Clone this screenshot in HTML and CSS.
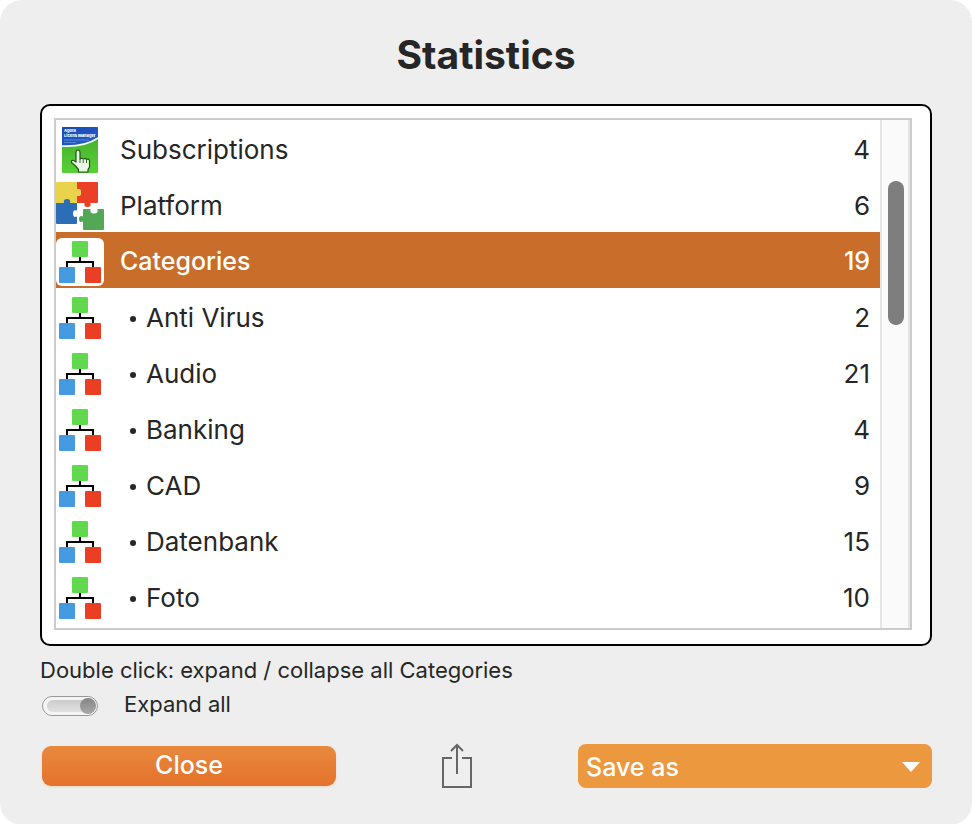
FILE: index.html
```html
<!DOCTYPE html>
<html lang="en">
<head>
<meta charset="utf-8">
<meta name="viewport" content="width=device-width, initial-scale=1">
<title>Statistics</title>
<link rel="stylesheet" href="styles.css">
</head>
<body>
<svg class="defs" aria-hidden="true">
  <symbol id="tree" viewBox="0 0 48 48">
    <path d="M24 18v6M11 30v-6h26v6" fill="none" stroke="#000" stroke-width="2"/>
    <rect x="16" y="3" width="16" height="16" rx="1" fill="#62d84e"/>
    <rect x="3" y="29" width="16" height="16" rx="1" fill="#469ae0"/>
    <rect x="29" y="29" width="16" height="16" rx="1" fill="#ea3f25"/>
  </symbol>
</svg>
<main class="dialog">
  <h1 class="title">Statistics</h1>
  <section class="frame">
    <div class="list">
      <table class="rows">
        <tbody>
          <tr>
            <td class="icon">
              <svg viewBox="0 0 48 48" aria-hidden="true">
                <defs>
                  <linearGradient id="sky" x1="0" y1="0" x2="1" y2="1"><stop offset="0" stop-color="#1747b8"/><stop offset="1" stop-color="#2862c8"/></linearGradient>
                  <linearGradient id="grass" x1="0" y1="0" x2="0" y2="1"><stop offset="0" stop-color="#46a52c"/><stop offset="1" stop-color="#55d334"/></linearGradient>
                </defs>
                <rect x="6" y="1" width="36" height="46" rx="1" fill="url(#grass)"/>
                <path d="M7 1h34q1 0 1 1v10q-13 9-36 8V2q0-1 1-1z" fill="url(#sky)"/>
                <path d="M6 20q23 1 36-8" fill="none" stroke="#f4fbff" stroke-width="1.6"/>
                <text class="cover" x="8" y="6">Agora</text>
                <text class="cover" x="8" y="11">Licens Manager</text>
                <path d="M8 14h25M8 16.500h12" stroke="#6f9be0" stroke-width=".7"/>
                <path d="M20 36V26.500q0-2.500 2-2.500t2 2.500V33l1.800-.8 1.700.8 1.800-.6 1.500 1 1.700-.4 1 1.500V41L32 43.500V46h-9.500v-2.500l-3-3.500-4-3.500q-.5-2.500 2-2z" fill="#e9f9e4" stroke="#26501f" stroke-width="1.200" stroke-linejoin="round"/>
                <path d="M24 33v4M27.200 33.500V37M30.500 34v3" stroke="#26501f" stroke-width=".9"/>
              </svg>
            </td>
            <td class="name">Subscriptions</td>
            <td class="count">4</td>
          </tr>
          <tr>
            <td class="icon">
              <svg viewBox="0 0 48 48" aria-hidden="true">
                <path d="M1 0h20v21H0V1q0-1 1-1z" fill="#e9d34b"/>
                <path d="M21 0h20q1 0 1 1v19q0 1-1 1h-6.500v1q1 3-3 3t-3-3v-1H21v-7.500q4 1.500 4-3t-4-3z" fill="#eb4026"/>
                <path d="M21 7.500q4-1.500 4 3t-4 3z" fill="#e9d34b"/>
                <path d="M0 21h8q-1-4 3-4t3 4h7v7.500q-4-1.500-4 3t4 3V41q0 1-1 1H1q-1 0-1-1z" fill="#2d6db8"/>
                <path d="M28 27h6.500q-1 4.500 3.500 4.500t3.500-4.500H47q1 0 1 1v19q0 1-1 1H28q-1 0-1-1v-7.500q-4 1.500-4-2.500t4-2.500V28q0-1 1-1z" fill="#52a855"/>
              </svg>
            </td>
            <td class="name">Platform</td>
            <td class="count">6</td>
          </tr>
          <tr class="selected">
            <td class="icon"><svg aria-hidden="true"><use href="#tree"/></svg></td>
            <td class="name">Categories</td>
            <td class="count">19</td>
          </tr>
          <tr class="child">
            <td class="icon"><svg aria-hidden="true"><use href="#tree"/></svg></td>
            <td class="name">Anti Virus</td>
            <td class="count">2</td>
          </tr>
          <tr class="child">
            <td class="icon"><svg aria-hidden="true"><use href="#tree"/></svg></td>
            <td class="name">Audio</td>
            <td class="count">21</td>
          </tr>
          <tr class="child">
            <td class="icon"><svg aria-hidden="true"><use href="#tree"/></svg></td>
            <td class="name">Banking</td>
            <td class="count">4</td>
          </tr>
          <tr class="child">
            <td class="icon"><svg aria-hidden="true"><use href="#tree"/></svg></td>
            <td class="name">CAD</td>
            <td class="count">9</td>
          </tr>
          <tr class="child">
            <td class="icon"><svg aria-hidden="true"><use href="#tree"/></svg></td>
            <td class="name">Datenbank</td>
            <td class="count">15</td>
          </tr>
          <tr class="child">
            <td class="icon"><svg aria-hidden="true"><use href="#tree"/></svg></td>
            <td class="name">Foto</td>
            <td class="count">10</td>
          </tr>
        </tbody>
      </table>
      <div class="track" aria-hidden="true"><div class="thumb"></div></div>
    </div>
  </section>
  <p class="hint">Double click: expand / collapse all Categories</p>
  <div class="option">
    <input class="switch" type="checkbox" id="expand" checked>
    <label for="expand">Expand all</label>
  </div>
  <footer class="actions">
    <button class="close" type="button">Close</button>
    <button class="share" type="button" aria-label="Share">
      <svg viewBox="0 0 32 46" aria-hidden="true"><path d="M11 15H2v29h28V15h-9M16 31V2M10 8l6-6 6 6" fill="none" stroke="#666" stroke-width="2"/></svg>
    </button>
    <div class="save">
      <select aria-label="Save as"><option>Save as</option></select>
      <svg class="arrow" viewBox="0 0 18 10" aria-hidden="true"><path d="M0 0h18L9 10z" fill="#fff"/></svg>
    </div>
  </footer>
</main>
</body>
</html>
```
FILE: styles.css
```css
* { box-sizing: border-box; }

body {
  margin: 0;
  background: #fff;
  color: #262626;
  font-family: Inter, "Liberation Sans", sans-serif;
  font-size: 26px;
}

.defs { display: block; width: 0; height: 0; }

.dialog {
  min-height: 100vh;
  padding: 29px 40px 36px;
  border-radius: 22px;
  background: #eee;
}

.title {
  margin: 0 0 23px;
  font-size: 39px;
  line-height: 52px;
  font-weight: 700;
  text-align: center;
}

.frame {
  padding: 12px 18px 14px 12px;
  border: 2px solid #000;
  border-radius: 10px;
  background: #fff;
}

.list {
  display: flex;
  border: 2px solid #ccc;
}

.rows {
  flex: 1;
  margin-bottom: 4px;
  border-collapse: collapse;
}

.rows td { height: 56px; padding: 0; }

.rows .icon { width: 48px; padding: 6px 0 2px; }

.icon svg { display: block; width: 48px; height: 48px; }

.rows .name { padding: 2px 0 0 16px; }

.rows .count { padding: 2px 10px 0 0; text-align: right; }

.selected { background: #c96e2a; color: #fff; font-size: 25px; font-weight: 500; }

.selected svg { border-radius: 6px; background: #fff; }

.child .name::before {
  content: "";
  display: inline-block;
  width: 6px;
  height: 6px;
  margin: 0 10px 5px;
  border-radius: 50%;
  background: #262626;
}

.cover { fill: #fff; font-size: 4px; font-weight: 800; }

.track {
  width: 30px;
  padding: 61px 4px 0 6px;
  border: solid #e5e5e5;
  border-width: 0 2px;
  background: #fafafa;
}

.thumb {
  width: 16px;
  height: 144px;
  border-radius: 8px;
  background: #7e7e7e;
}

.hint, .option { font-size: 22px; line-height: 28px; }

.hint { margin: 10px 0 6px; }

.option {
  display: flex;
  align-items: center;
  gap: 26px;
  padding-left: 2px;
}

.switch {
  appearance: none;
  display: flex;
  justify-content: space-between;
  align-items: center;
  width: 56px;
  height: 20px;
  margin: 4px 0 0;
  padding: 1px 1px 1px 4px;
  border: 1px solid #999;
  border-radius: 10px;
  background: #f4f4f4;
}

.switch::before {
  content: "";
  width: 40px;
  height: 12px;
  margin-right: -8px;
  border-radius: 6px;
  background: linear-gradient(#ccc, #e0e0e0);
}

.switch::after {
  content: "";
  width: 16px;
  height: 16px;
  border-radius: 50%;
  background: linear-gradient(#858585, #a8a8a8);
}

.switch:not(:checked) { flex-direction: row-reverse; }

.actions {
  display: grid;
  grid-template-columns: 147fr 121fr 177fr;
  align-items: center;
  margin-top: 25px;
  padding-left: 2px;
}

.close {
  height: 40px;
  padding: 0 0 2px;
  border: 0;
  border-radius: 9px;
  background: linear-gradient(#e8893d, #e4722b);
  box-shadow: 0 1px 2px #e8d5c8;
  color: #fff;
  font: 500 25px Inter, sans-serif;
}

.share {
  justify-self: center;
  padding: 0;
  border: 0;
  background: none;
}

.share svg { display: block; width: 32px; height: 46px; }

.save { position: relative; }

.save select {
  appearance: none;
  display: block;
  width: 100%;
  height: 44px;
  padding: 2px 40px 0 8px;
  border: 0;
  border-radius: 8px;
  background: #ec983f;
  color: #fff;
  font: 500 25px Inter, sans-serif;
}

.arrow {
  position: absolute;
  top: 18px;
  right: 12px;
  width: 18px;
  height: 10px;
  pointer-events: none;
}
```
